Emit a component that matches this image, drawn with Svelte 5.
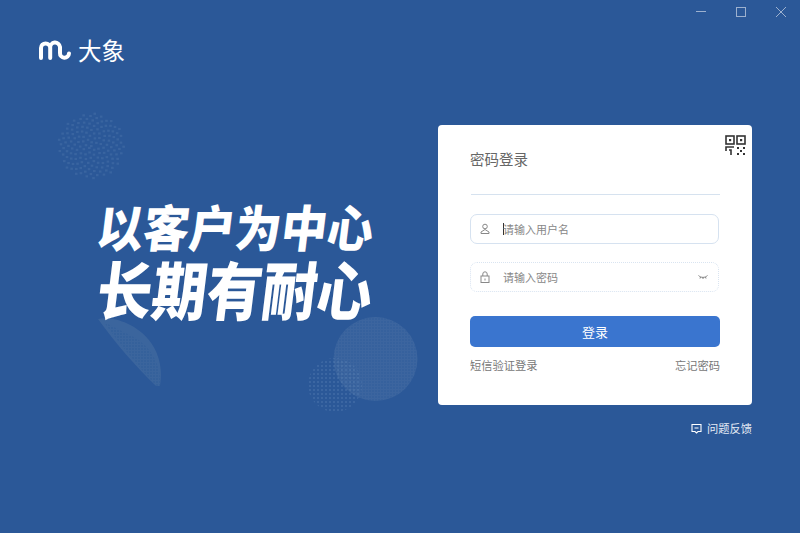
<script>
  const dots = [];
  for (let i = 0; i < 150; i++) {
    const a = i * 2.39996;
    const r = 33 * Math.sqrt(i / 150);
    dots.push({ x: 90 + r * Math.cos(a), y: 145 + r * Math.sin(a) });
  }
</script>

<div class="page">
  <svg class="decor" width="800" height="533" viewBox="0 0 800 533" aria-hidden="true">
    <defs>
      <pattern id="fine" width="3" height="3" patternUnits="userSpaceOnUse">
        <rect width="2" height="2" fill="#2b5898" opacity=".35"/>
      </pattern>
      <pattern id="fine2" width="4" height="4" patternUnits="userSpaceOnUse">
        <circle cx="2" cy="2" r="1" fill="#5f86b8" opacity=".4"/>
      </pattern>
    </defs>
    {#each dots as d}
      <rect x={d.x} y={d.y} width="2.6" height="2.2" fill="#5a81b4" opacity=".3"/>
    {/each}
    <path d="M98 319 C120 314 168 335 160 386 L156 386 C135 366 113 340 98 319Z" fill="#41699f" opacity=".75"/>
    <path d="M104 322 C116 340 140 368 156 386 L160 386 C162 365 150 345 132 336 Z" fill="url(#fine)"/>
    <circle cx="375.5" cy="359" r="42" fill="#4169a1" opacity=".8"/>
    <circle cx="375.5" cy="359" r="42" fill="url(#fine)"/>
    <circle cx="335" cy="385" r="27" fill="url(#fine2)"/>
  </svg>

  <div class="controls">
    <svg width="12" height="12" viewBox="0 0 12 12"><path d="M1 5.5H11" stroke="#9db1cf" stroke-width="1" fill="none"/></svg>
    <svg width="12" height="12" viewBox="0 0 12 12"><rect x="1.5" y="1.5" width="9" height="9" stroke="#9db1cf" stroke-width="1" fill="none"/></svg>
    <svg width="12" height="12" viewBox="0 0 12 12"><path d="M1 1L11 11M11 1L1 11" stroke="#9db1cf" stroke-width="1" fill="none"/></svg>
  </div>

  <header class="brand">
    <svg width="35" height="20" viewBox="0 0 35 20">
      <path d="M3 18V8A4.6 4.6 0 0 1 12.2 8V18M12.2 8A4.8 4.8 0 0 1 22 7V13A4.4 4.4 0 0 0 31 13.5" stroke="#fff" stroke-width="4" fill="none" stroke-linecap="round"/>
    </svg>
    <span>大象</span>
  </header>

  <main class="main">
    <div class="slogan">
      <div class="l1">以客户为中心</div>
      <div class="l2">长期有耐心</div>
    </div>

    <section class="card">
      <svg class="qr" width="21" height="21" viewBox="0 0 21 21">
        <g fill="none" stroke="#333" stroke-width="1.6">
          <rect x="1" y="1" width="8" height="8"/>
          <rect x="12" y="1" width="8" height="8"/>
          <path d="M9 12H1V16M4 15H6V20"/>
        </g>
        <g fill="#333">
          <rect x="4" y="4" width="2.2" height="2.2"/>
          <rect x="15" y="4" width="2.2" height="2.2"/>
          <rect x="12" y="12" width="2" height="2"/>
          <rect x="18" y="12" width="2" height="2"/>
          <rect x="15" y="15" width="2" height="2"/>
          <rect x="12" y="18" width="2" height="2"/>
          <rect x="18" y="18" width="2" height="2"/>
        </g>
      </svg>

      <h1>密码登录</h1>
      <div class="rule"></div>

      <div class="field">
        <svg width="12" height="12" viewBox="0 0 12 12"><g fill="none" stroke="#888" stroke-width="1"><circle cx="6" cy="3.5" r="2.3"/><path d="M6 6.5L2 9V10.5H10V9Z"/></g></svg>
        <span class="caret"></span><span class="ph">请输入用户名</span>
      </div>

      <div class="field dashed">
        <svg width="12" height="12" viewBox="0 0 12 12"><g fill="none" stroke="#888" stroke-width="1"><rect x="2" y="5" width="8" height="6.5"/><path d="M3.8 5V3a2.2 2.2 0 0 1 4.4 0V5"/><path d="M6 7.5V9.5"/></g></svg>
        <span class="ph nocaret">请输入密码</span>
        <svg class="eye" width="10" height="6" viewBox="0 0 10 6"><path d="M.5 1.5C3 4 7 4 9.5 1.5M2.5 3L2 4.5M5 3.5V5M7.5 3L8 4.5" stroke="#777" stroke-width=".9" fill="none"/></svg>
      </div>

      <button class="login">登录</button>

      <div class="links"><span>短信验证登录</span><span>忘记密码</span></div>
    </section>
  </main>

  <footer class="feedback">
    <svg width="11" height="11" viewBox="0 0 11 11"><path d="M1 1.5H10V8.5H7L5.5 10L4 8.5H1Z M3.5 5H7.5" stroke="#fff" stroke-width="1.1" fill="none"/></svg>
    <span>问题反馈</span>
  </footer>
</div>

<style>
  :global(body) { margin: 0; }
  .page {
    position: relative;
    width: 800px;
    height: 533px;
    overflow: hidden;
    background: #2b5898;
    font-family: "Noto Sans CJK SC", "Liberation Sans", sans-serif;
    display: flex;
    flex-direction: column;
  }
  .decor { position: absolute; left: 0; top: 0; }
  .controls {
    position: relative;
    height: 18px;
    padding-top: 6px;
    padding-right: 13px;
    display: flex;
    justify-content: flex-end;
    gap: 28px;
  }
  .brand {
    position: relative;
    display: flex;
    align-items: center;
    gap: 5px;
    margin-top: 14px;
    margin-left: 38px;
    height: 24px;
    color: #fff;
    font-size: 23.5px;
    line-height: 24px;
  }
  .main {
    position: relative;
    display: flex;
    margin-top: 63px;
  }
  .slogan {
    width: 340px;
    margin-left: 98px;
    padding-top: 72px;
    color: #fff;
    font-weight: 900;
    white-space: nowrap;
  }
  .l1 { font-size: 46px; line-height: 56px; transform: skewX(-7deg) scaleY(1.08); }
  .l2 { font-size: 55px; line-height: 62px; margin-top: 3px; transform: skewX(-7deg) scaleY(1.15); }
  .card {
    position: relative;
    width: 250px;
    height: 280px;
    padding: 0 32px;
    background: #fff;
    border-radius: 4px;
    flex: none;
  }
  .qr { position: absolute; right: 6px; top: 10px; }
  h1 {
    margin: 0;
    padding-top: 23px;
    font-size: 14.5px;
    line-height: 21px;
    font-weight: 400;
    color: #666;
  }
  .rule { height: 1px; background: #d6e2ef; margin: 25px 0 0 1px; }
  .field {
    box-sizing: border-box;
    height: 30px;
    margin-top: 19px;
    width: 249px;
    display: flex;
    align-items: center;
    border: 1px solid #d6e2f0;
    border-radius: 7px;
    padding-left: 8px;
    padding-right: 10px;
  }
  .field.dashed { margin-top: 18px; border-style: dotted; border-color: #d9e4f1; }
  .caret { width: 1px; height: 12px; background: #333; margin: 0 -1px 0 12px; }
  .ph { font-size: 11px; color: #888; }
  .nocaret { margin-left: 12px; }
  .eye { margin-left: auto; }
  .login {
    display: block;
    box-sizing: border-box;
    width: 250px;
    height: 31px;
    margin: 24px 0 0;
    padding: 0;
    border: 0;
    border-radius: 5px;
    background: #3a75cf;
    color: #fff;
    font: inherit;
    font-size: 13px;
  }
  .links {
    display: flex;
    justify-content: space-between;
    margin: 10px 0 0;
    font-size: 11.25px;
    line-height: 16px;
    color: #777;
  }
  .feedback {
    position: relative;
    display: flex;
    justify-content: flex-end;
    align-items: center;
    gap: 5px;
    margin-top: 15px;
    padding-right: 48px;
    color: #e6ecf5;
    font-size: 11.25px;
    line-height: 16px;
  }
</style>
